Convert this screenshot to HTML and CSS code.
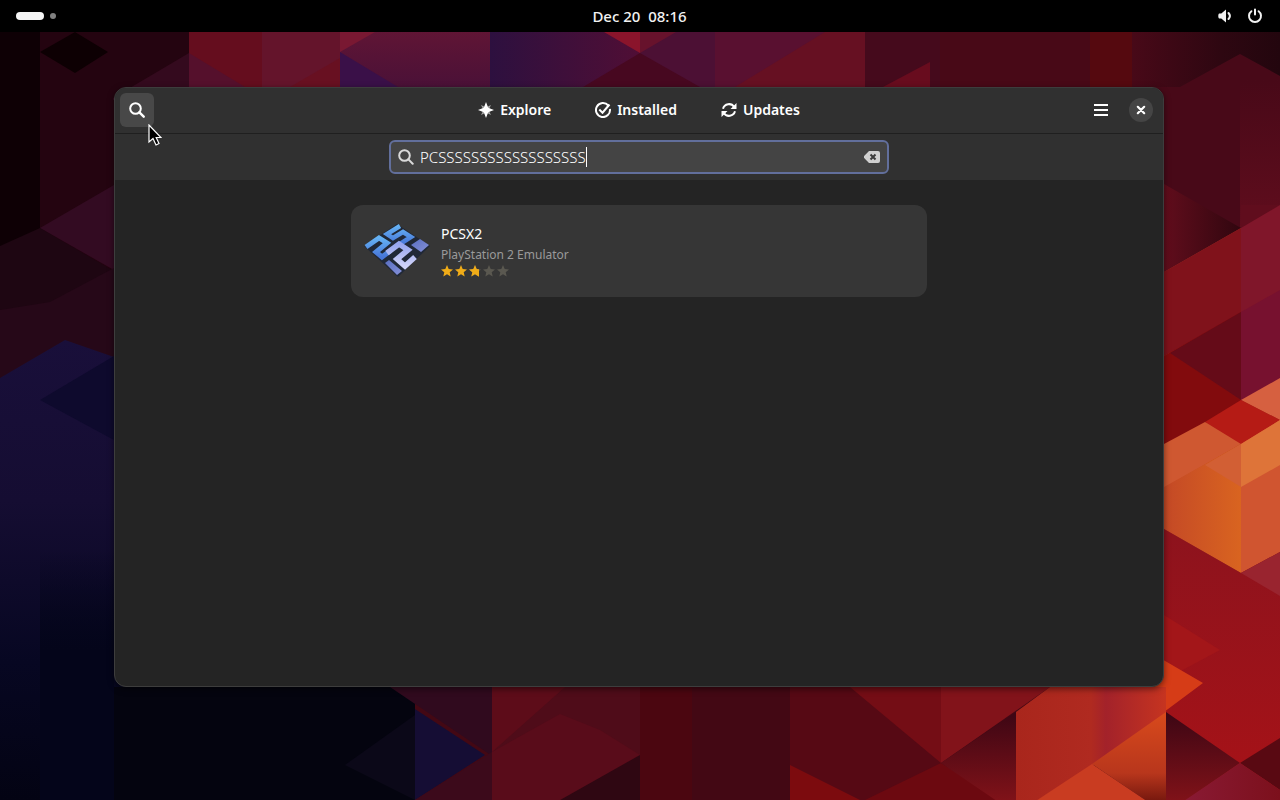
FILE: index.html
```
<!DOCTYPE html>
<html lang="en">
<head>
<meta charset="utf-8">
<title>Software</title>
<link rel="stylesheet" href="styles.css">
</head>
<body>
<svg class="wallpaper" viewBox="0 0 1280 800" preserveAspectRatio="none" aria-hidden="true">
  <defs>
    <linearGradient id="night" x1="0" y1="0" x2="0" y2="1"><stop offset="0" stop-color="#190f3a"/><stop offset=".35" stop-color="#150d32"/><stop offset=".7" stop-color="#070722"/><stop offset="1" stop-color="#030313"/></linearGradient>
    <linearGradient id="depth" x1="0" y1="0" x2="0" y2="1"><stop offset="0" stop-color="#04051a" stop-opacity="0"/><stop offset=".4" stop-color="#04051a"/></linearGradient>
    <linearGradient id="plum" x1="0" y1="0" x2="1" y2="0"><stop offset="0" stop-color="#2d103f"/><stop offset="1" stop-color="#500e35"/></linearGradient>
    <linearGradient id="rose" x1="0" y1="0" x2="0" y2="1"><stop offset="0" stop-color="#6c1733"/><stop offset="1" stop-color="#451038"/></linearGradient>
    <linearGradient id="ember" x1="0" y1="0" x2="0" y2="1"><stop offset="0" stop-color="#d84a1c"/><stop offset=".6" stop-color="#b8361c"/><stop offset="1" stop-color="#580a08"/></linearGradient>
    <linearGradient id="flame" x1="0" y1="0" x2="1" y2="0"><stop offset="0" stop-color="#c44926"/><stop offset="1" stop-color="#d96420"/></linearGradient>
    <linearGradient id="brick" x1="0" y1="0" x2="1" y2="0"><stop offset="0" stop-color="#a9261c"/><stop offset=".5" stop-color="#b02a20"/><stop offset=".6" stop-color="#a3222a"/><stop offset="1" stop-color="#c63420"/></linearGradient>
    <linearGradient id="wine" x1="0" y1="0" x2="0" y2="1"><stop offset="0" stop-color="#3c0614"/><stop offset="1" stop-color="#8a1419"/></linearGradient>
    <linearGradient id="dusk" x1="0" y1="0" x2="1" y2="0"><stop offset="0" stop-color="#610d1c"/><stop offset="1" stop-color="#30060f"/></linearGradient>
    <linearGradient id="cherry" x1="0" y1="0" x2="0" y2="1"><stop offset="0" stop-color="#8d131d"/><stop offset="1" stop-color="#a81217"/></linearGradient>
    <linearGradient id="violet" x1="0" y1="0" x2="1" y2="0"><stop offset="0" stop-color="#8e1d3c"/><stop offset="1" stop-color="#7c101c"/></linearGradient>
    <linearGradient id="glow" x1="0" y1="0" x2="0" y2="1"><stop offset="0" stop-color="#480918"/><stop offset="1" stop-color="#600d1d"/></linearGradient>
    <linearGradient id="shade" x1="0" y1="0" x2="1" y2="0"><stop offset="0" stop-color="#480918"/><stop offset=".6" stop-color="#2e0711"/><stop offset="1" stop-color="#23060e"/></linearGradient>
  </defs>
  <rect width="1280" height="800" fill="#430814"/>
  <rect width="40" height="400" fill="#0e0005"/>
  <rect x="40" width="149" height="400" fill="#240410"/>
  <path d="M40 52L75 32L108 52L75 73Z" fill="#0d0003"/>
  <path d="M113 98L189 53V100H113Z" fill="#340a1e"/>
  <path d="M40 228L114 185V270Z" fill="#330b22"/>
  <path d="M0 246L40 228L112 270L50 305L0 330Z" fill="#1e0612"/>
  <path d="M0 310L50 302L114 268V380H0Z" fill="#260818"/>
  <path d="M0 378L65 340L114 357L260 400L415 560V800H0Z" fill="url(#night)"/>
  <path d="M40 400L114 356V440Z" fill="#0e0a2d"/>
  <rect x="40" y="550" width="74" height="250" fill="url(#depth)"/>
  <rect x="114" y="687" width="301" height="113" fill="#04040f"/>
  <path d="M345 765L415 715V800Z" fill="#0b0818"/>
  <rect x="189" width="73" height="100" fill="#650d1e"/>
  <path d="M189 53L245 87H189Z" fill="#55102c"/>
  <rect x="262" width="78" height="100" fill="#64142b"/>
  <path d="M290 87L340 58V87Z" fill="#681021"/>
  <rect x="340" width="150" height="100" fill="url(#rose)"/>
  <path d="M340 52L375 32H340Z" fill="#791832"/>
  <path d="M340 52L398 87H340Z" fill="#3a1048"/>
  <rect x="490" width="150" height="100" fill="url(#plum)"/>
  <rect x="640" width="75" height="100" fill="#4c1034"/>
  <path d="M604 32H640V53Z" fill="#8a142b"/>
  <path d="M640 32H676L640 53Z" fill="#67122c"/>
  <path d="M583 87L640 53L700 87Z" fill="#470820"/>
  <rect x="715" width="150" height="100" fill="#591030"/>
  <path d="M735 87L825 32H865V87Z" fill="#661022"/>
  <rect x="865" y="32" width="75" height="60" fill="#450a1c"/>
  <path d="M883 87L930 62V87Z" fill="#680c1e"/>
  <rect x="940" y="32" width="150" height="60" fill="#480917"/>
  <rect x="1090" y="32" width="42" height="60" fill="#55090f"/>
  <rect x="1132" y="32" width="148" height="260" fill="#480918"/>
  <path d="M1132 32H1280V76L1240 54L1180 87H1132Z" fill="url(#shade)"/>
  <path d="M1240 80H1280V206L1240 228Z" fill="url(#glow)"/>
  <rect x="1164" y="228" width="116" height="345" fill="#a03020"/>
  <path d="M1164 184L1241 228L1164 272Z" fill="url(#dusk)"/>
  <path d="M1164 272L1241 228V313L1164 356Z" fill="#80121b"/>
  <path d="M1241 205H1280V228H1241Z" fill="#600d1d"/>
  <path d="M1241 228L1280 205V291L1241 313Z" fill="#80162a"/>
  <path d="M1164 356L1241 312V402L1205 424L1164 445Z" fill="#820b0d"/>
  <path d="M1170 353L1241 312V400Z" fill="#650b18"/>
  <path d="M1241 312L1280 290V380L1241 402Z" fill="#77112f"/>
  <path d="M1241 400L1280 378V420Z" fill="#d66040"/>
  <path d="M1205 422L1241 400L1280 420L1241 445Z" fill="#b51b15"/>
  <path d="M1164 444L1205 422L1241 444L1164 488Z" fill="#cf5831"/>
  <path d="M1164 487L1205 464L1241 444V573L1164 529Z" fill="url(#flame)"/>
  <path d="M1205 465L1241 444V487Z" fill="#d25f34"/>
  <path d="M1241 444L1280 420V552L1241 573Z" fill="#d05530"/>
  <path d="M1241 444L1280 420V465L1241 487Z" fill="#de7439"/>
  <path d="M1164 529L1241 573L1280 552V800H1164Z" fill="url(#cherry)"/>
  <path d="M1241 573L1280 552V596Z" fill="#99242f"/>
  <path d="M1164 615L1220 650L1164 680Z" fill="#a31619"/>
  <path d="M1160 658L1203 683L1164 712V687H1100Z" fill="#d63c17"/>
  <rect x="790" y="687" width="151" height="113" fill="#560914"/>
  <path d="M850 687L941 763V687Z" fill="#740d15"/>
  <path d="M941 687H1050L941 763Z" fill="#82131a"/>
  <path d="M790 800V765L860 800Z" fill="#7c0b0e"/>
  <path d="M865 800L941 763L1000 800Z" fill="#6c0910"/>
  <path d="M941 763L1016 712V814Z" fill="url(#wine)"/>
  <path d="M1016 712L1050 687H1166V714L1092 766L1016 814Z" fill="url(#brick)"/>
  <path d="M1092 764L1166 712V814Z" fill="url(#ember)"/>
  <path d="M1016 814L1092 764L1166 814Z" fill="#c93c21"/>
  <path d="M1166 712L1240 763L1166 814Z" fill="url(#wine)"/>
  <path d="M1240 763L1280 738V790Z" fill="#590912"/>
  <path d="M1150 824L1240 763L1280 790V824Z" fill="url(#violet)"/>
  <path d="M390 687H492V756Z" fill="#300a1e"/>
  <path d="M415 709L485 755L415 800Z" fill="#150d34"/>
  <path d="M415 800L492 752V800Z" fill="#3c0a1b"/>
  <rect x="492" y="687" width="148" height="113" fill="#4f0c19"/>
  <path d="M492 687H565L492 752Z" fill="#5d0c19"/>
  <path d="M492 752L560 714L600 730L640 755L555 804H492Z" fill="#590c1a"/>
  <path d="M553 804L640 755V804Z" fill="#2f0712"/>
  <rect x="640" y="687" width="52" height="113" fill="#4b0610"/>
</svg>

<header class="topbar">
  <button class="workspaces" aria-label="Activities"><span class="pill"></span><span class="dot"></span></button>
  <button class="clock">Dec 20&nbsp; 08:16</button>
  <button class="status" aria-label="System menu">
    <svg viewBox="0 0 16 16" fill="none"><path d="M2 5.500h2.300L9 1.500v13l-4.700-4H2C1 9.500 1 6.500 2 5.500z" fill="#f2f2f2"/><path d="M11.500 5q2.800 3 0 6" stroke="#f2f2f2" stroke-width="2" stroke-linecap="round"/></svg>
    <svg viewBox="0 0 16 16" fill="none" stroke="#f2f2f2" stroke-width="2" stroke-linecap="round"><path d="M4.400 3.200a6 6 0 1 0 7.200 0M8 1.500v5"/></svg>
  </button>
</header>

<main class="desktop">
  <section class="window" aria-label="Software">
    <header class="headerbar">
      <button class="tool active" aria-label="Search">
        <svg viewBox="0 0 16 16" fill="none" stroke="#fff" stroke-width="2"><circle cx="6.500" cy="6.500" r="5.300"/><path d="M10.400 10.400l4.300 4.300" stroke-width="2.400" stroke-linecap="round"/></svg>
      </button>
      <nav class="views">
        <button class="view">
          <svg viewBox="0 0 16 16"><path d="M3 3l4 2-2 2zM13 3l-2 4-2-2zM13 13l-4-2 2-2zM3 13l2-4 2 2z" fill="#aaa"/><path d="M8 0l2.200 5.800L16 8l-5.800 2.200L8 16l-2.200-5.800L0 8l5.800-2.200z" fill="#fff"/></svg>Explore
        </button>
        <button class="view">
          <svg viewBox="0 0 16 16" fill="none" stroke="#fff" stroke-width="2"><path d="M13.300 3.500A7 7 0 1 0 14.900 7M4.300 7.500L7.500 10.700L14.500 2.500"/></svg>Installed
        </button>
        <button class="view">
          <svg viewBox="0 0 16 16" fill="none" stroke="#fff" stroke-width="2"><path d="M2 6.700A6.200 6.200 0 0 1 13.200 5M14 9.300A6.200 6.200 0 0 1 2.800 11"/><path d="M15.500 1v6h-6zM.5 15V9h6z" fill="#fff" stroke="none"/></svg>Updates
        </button>
      </nav>
      <div class="controls">
        <button class="tool" aria-label="Menu"><svg viewBox="0 0 16 16" fill="#fff"><path d="M1 2h14v2H1zM1 7h14v2H1zM1 12h14v2H1z"/></svg></button>
        <button class="close" aria-label="Close"><svg viewBox="0 0 16 16" stroke="#fff" stroke-width="2.200" stroke-linecap="round"><path d="M4.800 4.800l6.400 6.400M11.200 4.800l-6.400 6.400"/></svg></button>
      </div>
    </header>
    <form class="searchbar">
      <div class="entry">
        <svg viewBox="0 0 16 16" fill="none" stroke="#dadada" stroke-width="2"><circle cx="6.500" cy="6.500" r="5.300"/><path d="M10.400 10.400l4.300 4.300" stroke-linecap="round"/></svg>
        <div class="field">
          <input class="query" type="text" aria-label="Search apps" value="PCSSSSSSSSSSSSSSSSSS">
          <span class="caret"></span>
        </div>
        <button class="clear" type="button" aria-label="Clear"><svg viewBox="0 0 16 16"><path d="M5 2h9a2 2 0 0 1 2 2v8a2 2 0 0 1-2 2H5L.600 9.500a2 2 0 0 1 0-3z" fill="#d0d0d0"/><path d="M6.500 5.500l5 5M11.500 5.500l-5 5" stroke="#3c3c3c" stroke-width="2"/></svg></button>
      </div>
    </form>
    <div class="results">
      <a class="app" href="#pcsx2">
        <svg class="logo" viewBox="0 0 64 64" fill="none" aria-hidden="true">
          <defs>
            <linearGradient id="blue" x1="0" y1="0" x2="0" y2="1"><stop offset="0" stop-color="#65b2f4"/><stop offset="1" stop-color="#4776d8"/></linearGradient>
            <linearGradient id="pale" x1="0" y1="0" x2="0" y2="1"><stop offset="0" stop-color="#96a5ee"/><stop offset="1" stop-color="#cfd2f8"/></linearGradient>
            <linearGradient id="indigo" x1="0" y1="0" x2="1" y2="1"><stop offset="0" stop-color="#596fc2"/><stop offset="1" stop-color="#8590d8"/></linearGradient>
          </defs>
          <path d="M-1 27L32 5L65 27L33 58Z" fill="#202837"/>
          <path d="M35 7L22 15L28 19L38 13L46 18L35 25" stroke="url(#blue)" stroke-width="4.500"/>
          <path d="M1 28L14 19L22 24L11 33L17 38L25 32" stroke="url(#blue)" stroke-width="5"/>
          <path d="M22 34L34 25L43 31L32 40L40 47L50 38" stroke="url(#pale)" stroke-width="5.500"/>
          <path d="M46 26L55 20L64 26L56 33Z" fill="url(#indigo)"/>
          <path d="M20 44L24 41L37 52L32 56Z" fill="url(#indigo)"/>
        </svg>
        <div class="details">
          <span class="name">PCSX2</span>
          <span class="summary">PlayStation 2 Emulator</span>
          <span class="stars" role="img" aria-label="Rated 3 of 5">
            <svg viewBox="0 0 12 12"><path d="M6 0l1.700 4 4.300.4-3.300 2.800 1 4.400L6 9.300l-3.700 2.300 1-4.400L0 4.400 4.300 4z"/></svg>
            <svg viewBox="0 0 12 12"><path d="M6 0l1.700 4 4.300.4-3.300 2.800 1 4.400L6 9.300l-3.700 2.300 1-4.400L0 4.400 4.300 4z"/></svg>
            <svg viewBox="0 0 12 12"><path class="off" d="M6 0l1.700 4 4.300.4-3.300 2.800 1 4.400L6 9.300l-3.700 2.300 1-4.400L0 4.400 4.300 4z"/><path d="M6 0l1.700 4 2.300.2v7.600L6 9.300l-3.700 2.300 1-4.400L0 4.400 4.300 4z"/></svg>
            <svg viewBox="0 0 12 12"><path class="off" d="M6 0l1.700 4 4.300.4-3.300 2.800 1 4.400L6 9.300l-3.700 2.300 1-4.400L0 4.400 4.300 4z"/></svg>
            <svg viewBox="0 0 12 12"><path class="off" d="M6 0l1.700 4 4.300.4-3.300 2.800 1 4.400L6 9.300l-3.700 2.300 1-4.400L0 4.400 4.300 4z"/></svg>
          </span>
        </div>
      </a>
    </div>
  </section>
</main>
<svg class="pointer" viewBox="0 0 14 22" aria-hidden="true"><path d="M1 1V18L5 14.500L8 21L11 19.500L8.200 13.500H13Z" fill="#000" stroke="#fff" stroke-width="1.200"/></svg>
</body>
</html>
```
FILE: styles.css
```
* { box-sizing: border-box; }

body {
  margin: 0;
  min-height: 100vh;
  display: flex;
  flex-direction: column;
  background: #430814;
  color: #fff;
  font: 14px/20px "Noto Sans", "Open Sans", sans-serif;
}

button {
  margin: 0;
  padding: 0;
  border: 0;
  background: none;
  color: inherit;
  font: inherit;
}

svg { display: block; flex: none; width: 16px; height: 16px; }

.wallpaper {
  position: absolute;
  inset: 0;
  width: 100%;
  height: 100%;
  z-index: -1;
}

.topbar {
  display: grid;
  grid-template-columns: 1fr auto 1fr;
  align-items: center;
  height: 32px;
  padding: 0 17px 0 16px;
  background: #000;
}

.workspaces { display: flex; align-items: center; gap: 6px; justify-self: start; }
.pill { width: 28px; height: 8px; border-radius: 4px; background: #f6f6f6; }
.dot { width: 6px; height: 6px; border-radius: 50%; background: #808080; }
.clock { font-size: 15px; font-weight: 500; color: #f2f2f2; }
.status { display: flex; gap: 14px; justify-self: end; }

.desktop { flex: 1; display: flex; padding: 55px 116px 113px 114px; }

.window {
  flex: 1;
  display: flex;
  flex-direction: column;
  overflow: hidden;
  border: 1px solid #3d3d3d;
  border-radius: 12px;
  background: #242424;
  box-shadow: 0 2px 6px rgba(0, 0, 0, 0.5);
}

.headerbar {
  display: grid;
  grid-template-columns: 1fr auto 1fr;
  align-items: center;
  height: 46px;
  padding: 0 5px 2px;
  border-bottom: 1px solid #1f1f1f;
  background: #303030;
}

.tool {
  display: flex;
  align-items: center;
  justify-content: center;
  width: 34px;
  height: 34px;
  border-radius: 6px;
}

.active { background: #484848; }
.views { display: flex; gap: 44px; }
.view { display: flex; align-items: center; gap: 6px; font-weight: 600; }
.controls { display: flex; align-items: center; justify-content: flex-end; gap: 11px; padding-right: 5px; }

.close {
  display: flex;
  align-items: center;
  justify-content: center;
  width: 24px;
  height: 24px;
  border-radius: 50%;
  background: #454545;
}

.searchbar {
  display: flex;
  justify-content: center;
  padding: 6px;
  background: #303030;
}

.entry {
  display: flex;
  align-items: center;
  gap: 6px;
  width: 500px;
  height: 34px;
  padding: 0 7px;
  border: 2px solid #626f9c;
  border-radius: 6px;
  background: #444;
}

.field { position: relative; flex: 1; display: flex; }

.query {
  width: 100%;
  padding: 0;
  border: 0;
  outline: 0;
  background: none;
  color: #fff;
  font: inherit;
  font-size: 15px;
  font-weight: 300;
}

.caret { position: absolute; left: 166px; top: 0; width: 1px; height: 20px; background: #fff; }

.results { display: flex; justify-content: center; padding: 25px 12px; }

.app {
  display: flex;
  align-items: center;
  gap: 12px;
  width: 576px;
  height: 92px;
  padding: 14px;
  border-radius: 12px;
  background: #363636;
  color: #fff;
  text-decoration: none;
}

.logo { width: 64px; height: 64px; overflow: visible; }
.details { display: flex; flex-direction: column; }
.name { padding-bottom: 1px; }
.summary { color: #9a9a9a; font-size: 12px; }
.stars { display: flex; gap: 2px; padding-bottom: 2px; }
.stars svg { width: 12px; height: 12px; fill: #f0ac18; }
.stars .off { fill: #5a5850; }

.pointer { position: absolute; left: 148px; top: 124px; width: 14px; height: 22px; }
```
